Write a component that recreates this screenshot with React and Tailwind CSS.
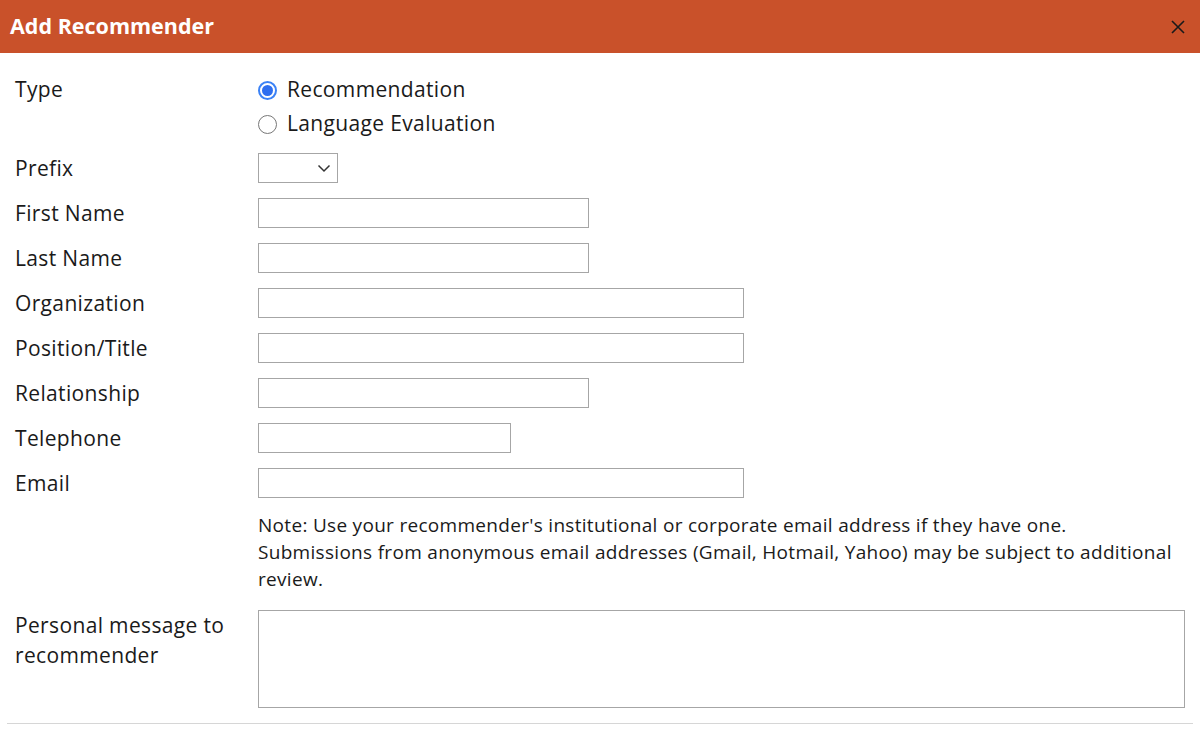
import { useState } from 'react';

/* campos de texto: etiqueta + ancho del input */
const FIELDS = [
  { id: 'first', label: 'First Name',   w: 'w-[331px]' },
  { id: 'last',  label: 'Last Name',    w: 'w-[331px]' },
  { id: 'org',   label: 'Organization', w: 'w-[486px]' },
  { id: 'pos',   label: 'Position/Title', w: 'w-[486px]' },
  { id: 'rel',   label: 'Relationship', w: 'w-[331px]' },
  { id: 'tel',   label: 'Telephone',    w: 'w-[253px]' },
  { id: 'email', label: 'Email',        w: 'w-[486px]' },
];

const Radio = ({ checked, label, onClick }) => (
  <button type="button" onClick={onClick} className="flex h-[34px] items-center pt-[2px] text-left">
    <span
      className={
        checked
          ? 'flex h-[19px] w-[19px] items-center justify-center rounded-full border-2 border-[#3b82f6] bg-white'
          : 'h-[19px] w-[19px] rounded-full border-[1.5px] border-[#777] bg-white'
      }
    >
      {checked && <span className="h-[11px] w-[11px] rounded-full bg-[#2f6ff0]" />}
    </span>
    <span className="ml-[10px]">{label}</span>
  </button>
);

export default function App() {
  const [type, setType] = useState('rec');

  return (
    <div className="min-h-[752px] w-[1200px] bg-white text-[21px] tracking-[0.35px] text-[#1a1a1a]" style={{ fontFamily: '"Open Sans", "Noto Sans", sans-serif' }}>
      {/* cabecera */}
      <header className="flex h-[53px] items-center justify-between bg-[#c9512a] pl-[10px] pr-[14px]">
        <h1 className="text-[21.5px] font-bold tracking-normal text-white">Add Recommender</h1>
        <button type="button" aria-label="Close" className="text-[#1a1a1a]">
          <svg width="16" height="16" viewBox="0 0 16 16" fill="none" stroke="currentColor" strokeWidth="1.6">
            <path d="M2 2l12 12M14 2L2 14" />
          </svg>
        </button>
      </header>

      <div className="px-[15px] pt-[19px]">
        {/* tipo */}
        <div className="flex">
          <div className="w-[243px] leading-[34px]">Type</div>
          <div className="flex flex-col">
            <Radio checked={type === 'rec'} label="Recommendation" onClick={() => setType('rec')} />
            <Radio checked={type === 'lang'} label="Language Evaluation" onClick={() => setType('lang')} />
          </div>
        </div>

        {/* prefijo */}
        <div className="mt-[13px] flex items-center">
          <div className="w-[243px] leading-[30px]">Prefix</div>
          <div className="flex h-[30px] w-[80px] items-center justify-end border-[1.5px] border-[#a6a6a6] pr-[6px]">
            <svg width="14" height="9" viewBox="0 0 14 9" fill="none" stroke="#333" strokeWidth="1.5">
              <path d="M1.5 1.5l5.5 5.5 5.5-5.5" />
            </svg>
          </div>
        </div>

        {FIELDS.map(f => (
          <div key={f.id} className="mt-[15px] flex items-center">
            <label htmlFor={f.id} className="w-[243px] leading-[30px]">{f.label}</label>
            <input id={f.id} className={`h-[30px] ${f.w} border-[1.5px] border-[#a6a6a6] px-2 outline-none`} />
          </div>
        ))}

        {/* nota */}
        <div className="mt-[14px] flex">
          <div className="w-[243px]" />
          <p className="w-[925px] text-[19px] leading-[27px] tracking-[0.3px]">
            Note: Use your recommender's institutional or corporate email address if they have one.
            Submissions from anonymous email addresses (Gmail, Hotmail, Yahoo) may be subject to additional review.
          </p>
        </div>

        {/* mensaje */}
        <div className="mt-[17px] flex">
          <label htmlFor="msg" className="w-[243px] leading-[30px]">Personal message to recommender</label>
          <textarea id="msg" className="h-[98px] w-[928px] resize-none border-[1.5px] border-[#a6a6a6] p-2 outline-none" />
        </div>
      </div>

      <div className="mx-[7px] mt-[15px] border-t-[1.5px] border-[#d6d6d6]" />
    </div>
  );
}
